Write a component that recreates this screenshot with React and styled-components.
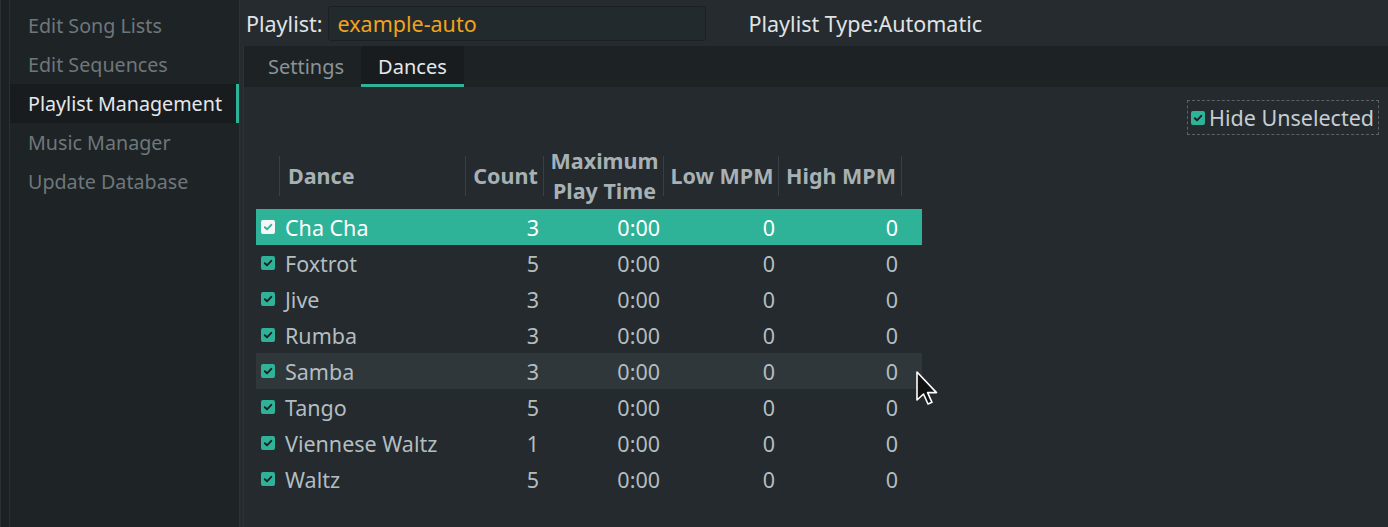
import React from "react";
import styled, { createGlobalStyle } from "styled-components";

const Global = createGlobalStyle`
  html, body { margin: 0; padding: 0; background: #252b2e; }
  body { font-family: "Noto Sans", "Open Sans", sans-serif; }
  * { box-sizing: border-box; }
`;

const TEAL = "#2eb398";

const Root = styled.div`
  display: flex;
  width: 1388px;
  height: 527px;
  overflow: hidden;
  background: #252b2e;
  position: relative;
  font-size: 21.5px;
`;

const Edge = styled.div`
  width: 10px;
  background: #1c2124;
  border-left: 1px solid #2a3033;
  border-right: 1px solid #2a3033;
`;

const Sidebar = styled.nav`
  width: 230px;
  background: #1e2326;
  border-right: 1px solid #2b3134;
  padding-top: 6px;
  display: flex;
  flex-direction: column;
  font-size: 19.7px;
`;

const NavItem = styled.div`
  height: 39px;
  display: flex;
  align-items: center;
  padding-left: 18px;
  color: ${(p) => (p.$active ? "#e4e8ea" : "#6e777b")};
  background: ${(p) => (p.$active ? "#181c1f" : "transparent")};
  border-right: 3px solid ${(p) => (p.$active ? TEAL : "transparent")};
  white-space: nowrap;
`;

const Main = styled.div`
  flex: 1;
  display: flex;
  flex-direction: column;
  min-width: 0;
`;

const TopBar = styled.div`
  height: 46px;
  display: flex;
  align-items: center;
  padding-left: 6px;
  color: #e0e4e6;
`;

const Label = styled.span`
  margin-right: 5px;
`;

const NameBox = styled.div`
  width: 378px;
  height: 35px;
  border: 1px solid #1b2022;
  border-radius: 3px;
  background: #232a2d;
  display: flex;
  align-items: center;
  padding-left: 9px;
  color: #f2a31c;
`;

const TypeLabel = styled.span`
  margin-left: 43px;
`;

const TabWidget = styled.div`
  flex: 1;
  margin-left: 3px;
  display: flex;
  flex-direction: column;
  border-left: 1px solid #2b3235;
`;

const TabBar = styled.div`
  height: 41px;
  background: #1d2224;
  display: flex;
  padding-left: 7px;
  font-size: 20px;
`;

const Tab = styled.div`
  padding: 0 17px;
  display: flex;
  align-items: center;
  color: ${(p) => (p.$active ? "#e4e8ea" : "#8a9497")};
  background: ${(p) => (p.$active ? "#181c1e" : "transparent")};
  border-bottom: 3px solid ${(p) => (p.$active ? TEAL : "transparent")};
  padding-top: 3px;
`;

const Panel = styled.div`
  flex: 1;
  background: #242a2d;
  padding: 13px 9px 0 12px;
  display: flex;
  flex-direction: column;
`;

const OptionRow = styled.div`
  display: flex;
  justify-content: flex-end;
`;

const HideToggle = styled.div`
  display: flex;
  align-items: center;
  gap: 4px;
  height: 35px;
  padding: 0 4px 0 3px;
  border: 1px dashed #5a6266;
  color: #c5ced1;
`;

const Box = styled.span`
  width: 14px;
  height: 14px;
  border-radius: 2px;
  background: ${(p) => (p.$light ? "#f4f6f7" : TEAL)};
  display: inline-flex;
  align-items: center;
  justify-content: center;
  flex: none;
`;

const Table = styled.div`
  margin-top: 19px;
  display: flex;
  flex-direction: column;
  width: 666px;
`;

const cols = "23px 186px 78px 120px 115px 123px 21px";

const HeaderRow = styled.div`
  display: grid;
  grid-template-columns: ${cols};
  height: 44px;
  align-items: center;
  margin-bottom: 11px;
`;

const HeadCell = styled.div`
  height: 40px;
  display: flex;
  align-items: center;
  justify-content: ${(p) => (p.$left ? "flex-start" : "center")};
  text-align: center;
  padding: 0 6px 0 8px;
  font-weight: 700;
  color: #a7b1b4;
  line-height: 30px;
  border-left: ${(p) => (p.$noBorder ? "none" : "1px solid #394044")};
  white-space: nowrap;
`;

const Row = styled.div`
  display: grid;
  grid-template-columns: ${cols};
  height: 36px;
  align-items: center;
  background: ${(p) =>
    p.$selected ? TEAL : p.$hover ? "#30373a" : "transparent"};
  color: ${(p) => (p.$selected ? "#ffffff" : "#b3bdc1")};
`;

const CheckCell = styled.div`
  padding-left: 5px;
  display: flex;
  align-items: center;
`;

const NameCell = styled.div`
  padding-left: 6px;
  white-space: nowrap;
`;

const NumCell = styled.div`
  text-align: right;
  padding-right: ${(p) => p.$pr || 3}px;
`;

const Cursor = styled.svg`
  position: absolute;
  left: 915px;
  top: 370px;
`;

function Check({ light }) {
  return (
    <Box $light={light}>
      <svg width="10" height="10" viewBox="0 0 10 10">
        <path
          d="M1.8 5.2 L4 7.3 L8.3 2.8"
          fill="none"
          stroke={light ? TEAL : "#1a2023"}
          strokeWidth="1.9"
          strokeLinecap="round"
          strokeLinejoin="round"
        />
      </svg>
    </Box>
  );
}

const nav = [
  "Edit Song Lists",
  "Edit Sequences",
  "Playlist Management",
  "Music Manager",
  "Update Database",
];

const dances = [
  ["Cha Cha", 3],
  ["Foxtrot", 5],
  ["Jive", 3],
  ["Rumba", 3],
  ["Samba", 3],
  ["Tango", 5],
  ["Viennese Waltz", 1],
  ["Waltz", 5],
];

export default function App() {
  return (
    <>
      <Global />
      <Root>
        <Edge />
        <Sidebar>
          {nav.map((n) => (
            <NavItem key={n} $active={n === "Playlist Management"}>
              {n}
            </NavItem>
          ))}
        </Sidebar>
        <Main>
          <TopBar>
            <Label>Playlist:</Label>
            <NameBox>example-auto</NameBox>
            <TypeLabel>Playlist Type:Automatic</TypeLabel>
          </TopBar>
          <TabWidget>
            <TabBar>
              <Tab>Settings</Tab>
              <Tab $active>Dances</Tab>
            </TabBar>
            <Panel>
              <OptionRow>
                <HideToggle>
                  <Check />
                  Hide Unselected
                </HideToggle>
              </OptionRow>
              <Table>
                <HeaderRow>
                  <HeadCell $noBorder />
                  <HeadCell $left>Dance</HeadCell>
                  <HeadCell>Count</HeadCell>
                  <HeadCell>
                    Maximum
                    <br />
                    Play Time
                  </HeadCell>
                  <HeadCell>Low MPM</HeadCell>
                  <HeadCell>High MPM</HeadCell>
                  <HeadCell />
                </HeaderRow>
                {dances.map(([name, count], i) => (
                  <Row key={name} $selected={i === 0} $hover={name === "Samba"}>
                    <CheckCell>
                      <Check light={i === 0} />
                    </CheckCell>
                    <NameCell>{name}</NameCell>
                    <NumCell $pr={4}>{count}</NumCell>
                    <NumCell>0:00</NumCell>
                    <NumCell>0</NumCell>
                    <NumCell>0</NumCell>
                    <div />
                  </Row>
                ))}
              </Table>
            </Panel>
          </TabWidget>
        </Main>
        <Cursor width="26" height="40" viewBox="0 0 26 40">
          <path
            d="M2 2 L2 30 L8.5 24 L13 34 L17 32.3 L12.6 22.6 L21.5 22.6 Z"
            fill="#111"
            stroke="#fff"
            strokeWidth="1.6"
            strokeLinejoin="round"
          />
        </Cursor>
      </Root>
    </>
  );
}
